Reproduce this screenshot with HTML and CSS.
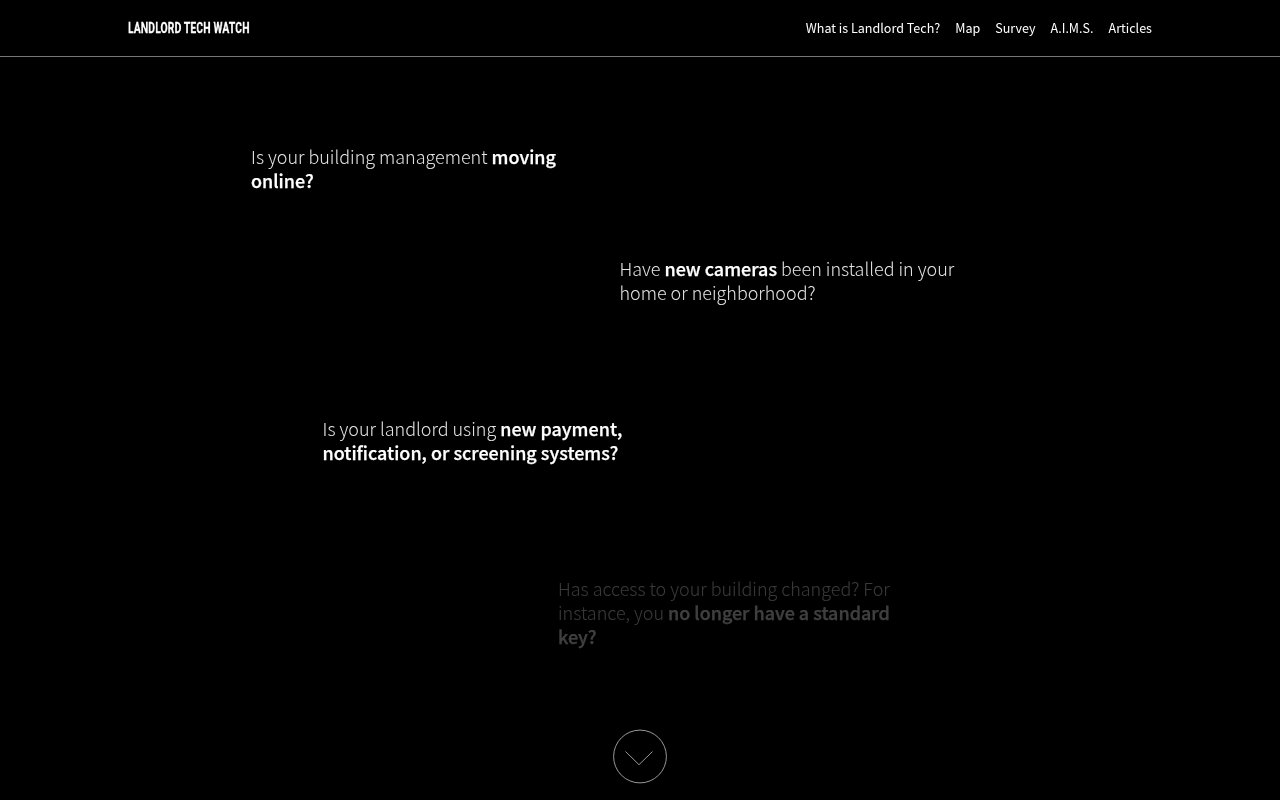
FILE: index.html
```html
<!DOCTYPE html>
<html lang="en">
<head>
<meta charset="utf-8">
<title>Landlord Tech Watch</title>
<link rel="stylesheet" href="styles.css">
</head>
<body>
<header class="header">
  <a class="brand">LANDLORD TECH WATCH</a>
  <nav class="nav">
    <a>What is Landlord Tech?</a>
    <a>Map</a>
    <a>Survey</a>
    <a>A.I.M.S.</a>
    <a>Articles</a>
  </nav>
</header>
<main class="questions">
  <p class="question q1">Is your building management <b>moving<br>online?</b></p>
  <p class="question q2">Have <b>new cameras</b> been installed in your<br>home or neighborhood?</p>
  <p class="question q3">Is your landlord using <b>new payment,<br>notification, or screening systems?</b></p>
  <p class="question q4">Has access to your building changed? For<br>instance, you <b>no longer have a standard<br>key?</b></p>
  <a class="scroll" aria-label="Scroll down">
    <svg width="54" height="55" viewBox="0 0 54 55" fill="none" stroke="#999">
      <circle cx="27" cy="27.5" r="26.4"/>
      <path d="M12.5 22.5 26 35.7 39.5 22.5"/>
    </svg>
  </a>
</main>
</body>
</html>
```

FILE: styles.css
```css
body {
  margin: 0;
  height: 800px;
  overflow: hidden;
  background: #000;
  color: #fff;
  font-family: "Source Sans Pro", "Noto Sans CJK JP", sans-serif;
}
.header {
  box-sizing: border-box;
  height: 57px;
  padding: 0 128px;
  border-bottom: 1px solid #777;
  display: flex;
  align-items: center;
  justify-content: space-between;
}
.brand {
  width: 121px;
  font: bold 15.5px/20px Roboto, sans-serif;
  letter-spacing: 0.3px;
  white-space: nowrap;
  transform: scaleX(0.66);
  transform-origin: left;
  -webkit-text-stroke: 0.3px #fff;
  will-change: transform;
}
.nav {
  display: flex;
  gap: 15px;
  font-size: 12.55px;
  line-height: 20px;
  will-change: opacity;
}
.questions {
  display: flex;
  flex-direction: column;
  padding-top: 87px;
}
.question {
  margin: 0;
  font-size: 17.97px;
  font-weight: 300;
  line-height: 24px;
  white-space: nowrap;
  color: #e4e4e4;
  will-change: opacity;
}
.question b {
  font-weight: 500;
  color: #fff;
  -webkit-text-stroke: 0.25px #fff;
}
.q1 { margin-left: 251px; }
.q2 { margin: 64px 0 0 619.5px; }
.q3 { margin: 112px 0 0 322.5px; }
.q4 { margin: 112px 0 0 558px; opacity: 0.25; }
.scroll {
  align-self: center;
  height: 55px;
  margin-top: 81px;
}
.scroll svg { display: block; }
```
